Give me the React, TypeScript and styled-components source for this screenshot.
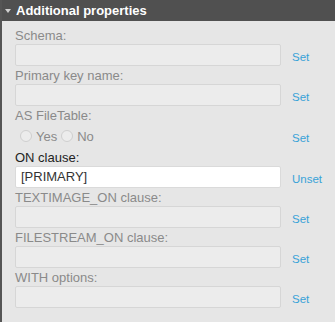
import React from 'react';
import styled, { createGlobalStyle } from 'styled-components';

const GlobalStyle = createGlobalStyle`
  html, body {
    margin: 0;
    padding: 0;
    background: #e6e6e6;
  }
  body {
    font-family: "Liberation Sans", Arial, sans-serif;
  }
`;

const Panel = styled.div`
  width: 335px;
  height: 322px;
  box-sizing: border-box;
  background: #e6e6e6;
  border-left: 2px solid #555555;
`;

const Header = styled.div`
  height: 21px;
  line-height: 21px;
  background: #505050;
  color: #ffffff;
  font-size: 13px;
  font-weight: 700;
  display: flex;
  align-items: center;
  padding-left: 3px;
`;

const Caret = styled.span`
  width: 0;
  height: 0;
  border-left: 3px solid transparent;
  border-right: 3px solid transparent;
  border-top: 4px solid #d0d0d0;
  margin-right: 5px;
  margin-top: 1px;
`;

const Body = styled.div`
  padding: 5px 0 0 13px;
`;

const Label = styled.div<{ $active?: boolean }>`
  margin-top: 2px;
  height: 16px;
  line-height: 16px;
  font-size: 13px;
  color: ${({ $active }) => ($active ? '#222222' : '#8a8a8a')};
`;

const Row = styled.div<{ $tall?: boolean }>`
  display: flex;
  align-items: center;
  height: ${({ $tall }) => ($tall ? '24px' : '22px')};
`;

const Field = styled.div<{ $active?: boolean }>`
  width: 266px;
  height: 22px;
  box-sizing: border-box;
  border: 1px solid ${({ $active }) => ($active ? '#dadada' : '#d6d6d6')};
  border-radius: 2px;
  background: ${({ $active }) => ($active ? '#ffffff' : '#ececec')};
  color: #333333;
  font-size: 13px;
  line-height: 20px;
  padding-left: 5px;
`;

const Radios = styled.div`
  width: 266px;
  display: flex;
  align-items: center;
  padding-left: 5px;
  box-sizing: border-box;
  font-size: 13px;
  color: #8a8a8a;
`;

const RadioDot = styled.span`
  width: 12px;
  height: 12px;
  box-sizing: border-box;
  border-radius: 50%;
  border: 1px solid #cfcfcf;
  background: #ececec;
  margin-right: 4px;
`;

const RadioText = styled.span`
  margin-right: 4px;
`;

const Action = styled.a`
  margin-left: 11px;
  font-size: 11.5px;
  color: #38a2d8;
  text-decoration: none;
  padding-top: 4px;
  cursor: pointer;
`;

type Prop = { label: string; value?: string; active?: boolean };

const props: Prop[] = [
  { label: 'Schema:' },
  { label: 'Primary key name:' },
];

const after: Prop[] = [
  { label: 'ON clause:', value: '[PRIMARY]', active: true },
  { label: 'TEXTIMAGE_ON clause:' },
  { label: 'FILESTREAM_ON clause:' },
  { label: 'WITH options:' },
];

const PropRow = ({ label, value, active }: Prop) => (
  <>
    <Label $active={active}>{label}</Label>
    <Row>
      <Field $active={active}>{value}</Field>
      <Action>{active ? 'Unset' : 'Set'}</Action>
    </Row>
  </>
);

export default function App() {
  return (
    <>
      <GlobalStyle />
      <Panel>
        <Header>
          <Caret />
          Additional properties
        </Header>
        <Body>
          {props.map((p) => (
            <PropRow key={p.label} {...p} />
          ))}
          <Label>AS FileTable:</Label>
          <Row $tall>
            <Radios>
              <RadioDot />
              <RadioText>Yes</RadioText>
              <RadioDot />
              <RadioText>No</RadioText>
            </Radios>
            <Action>Set</Action>
          </Row>
          {after.map((p) => (
            <PropRow key={p.label} {...p} />
          ))}
        </Body>
      </Panel>
    </>
  );
}
